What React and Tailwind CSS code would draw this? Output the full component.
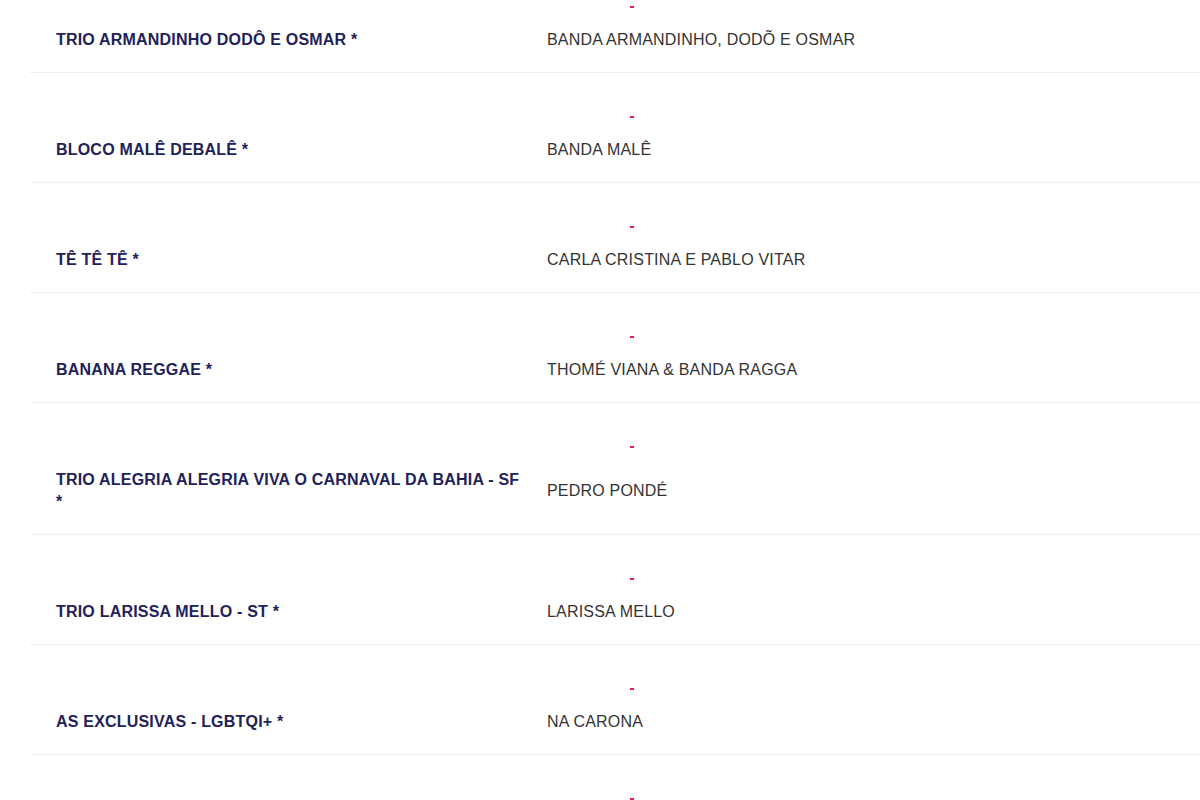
const rows = [
  { name: 'TRIO ARMANDINHO DODÔ E OSMAR *', artist: 'BANDA ARMANDINHO, DODÕ E OSMAR' },
  { name: 'BLOCO MALÊ DEBALÊ *', artist: 'BANDA MALÊ' },
  { name: 'TÊ TÊ TÊ *', artist: 'CARLA CRISTINA E PABLO VITAR' },
  { name: 'BANANA REGGAE *', artist: 'THOMÉ VIANA & BANDA RAGGA' },
  { name: 'TRIO ALEGRIA ALEGRIA VIVA O CARNAVAL DA BAHIA - SF *', artist: 'PEDRO PONDÉ' },
  { name: 'TRIO LARISSA MELLO - ST *', artist: 'LARISSA MELLO' },
  { name: 'AS EXCLUSIVAS - LGBTQI+ *', artist: 'NA CARONA' },
  { name: '', artist: '' },
];

export default function App() {
  return (
    <div className="w-[1200px] h-[800px] overflow-hidden bg-white font-['Liberation_Sans',Arial,sans-serif]">
      <div className="pl-[30px] -mt-[37px]">
        {rows.map((row, i) => (
          <div key={i} className="border-b border-[#eeeeee] pt-[34px] pb-[21px]">
            <div className="pl-[600px] h-5 flex items-center">
              <span className="block w-[4px] h-[2px] bg-[#e8175d]" />
            </div>
            <div className="flex items-center mt-3 min-h-[22px]">
              <div className="pl-[26px] w-[517px] pr-[22px] text-[16px] leading-[22px] font-bold tracking-[0.2px] text-[#222258]">
                {row.name}
              </div>
              <div className="text-[16px] leading-[22px] tracking-[0.2px] text-[#333333]">
                {row.artist}
              </div>
            </div>
          </div>
        ))}
      </div>
    </div>
  );
}
